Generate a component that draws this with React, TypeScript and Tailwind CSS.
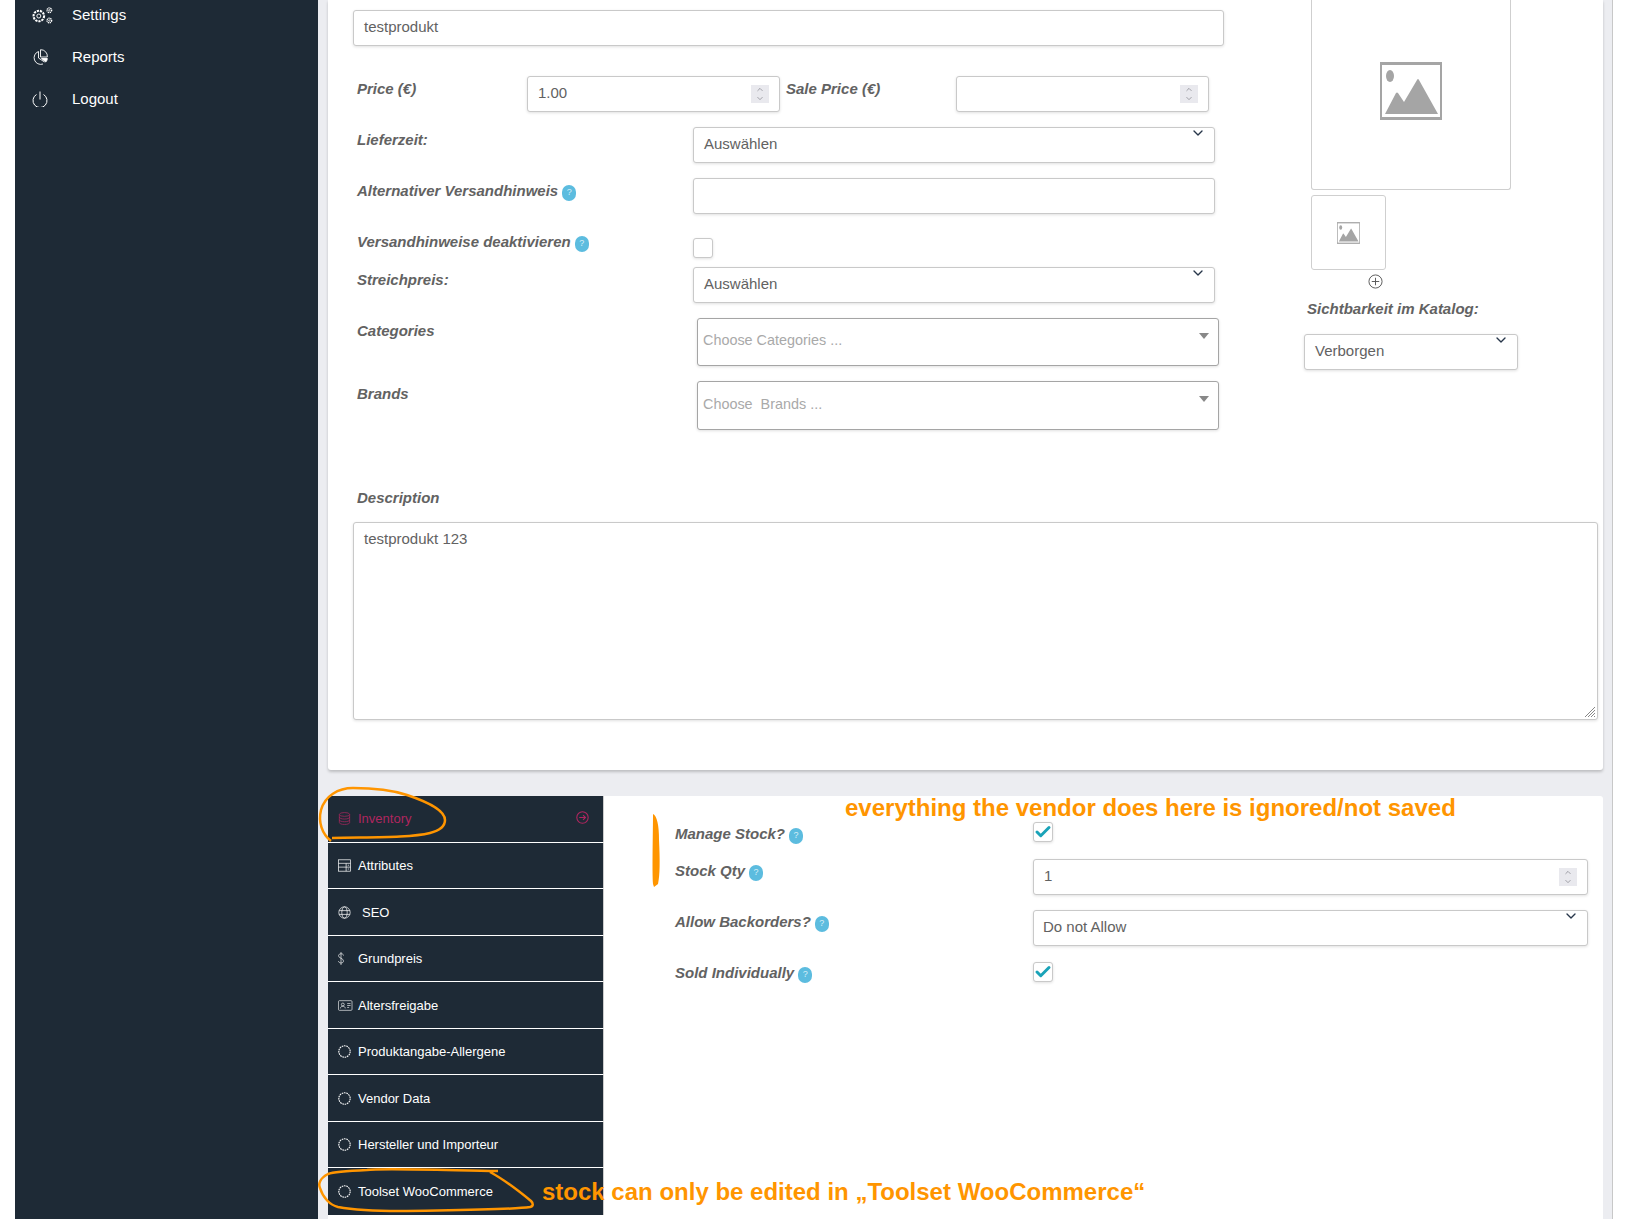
import { ChevronDown, ChevronUp, Check } from "lucide-react";

const font = "font-['Liberation_Sans',Arial,sans-serif]";
const field =
  "border border-[#c9c9c9] rounded-[3px] bg-white shadow-[0_1px_3px_rgba(0,0,0,0.12)] text-[15px] text-[#626262]";

function Ic({ children, className }: { children: React.ReactNode; className?: string }) {
  return (
    <svg viewBox="0 0 24 24" fill="none" stroke="currentColor" strokeWidth="1.3" className={className}>
      {children}
    </svg>
  );
}

function Gears() {
  return (
    <svg viewBox="0 0 20 16" fill="none" stroke="currentColor" className="w-[21px] h-[17px] text-white">
      <circle cx="6.500" cy="8.500" r="5" strokeDasharray="2.100 .9" strokeWidth="2" />
      <circle cx="6.500" cy="8.500" r="1.900" strokeWidth=".9" />
      <circle cx="16.500" cy="3" r="2.200" strokeDasharray="1.100 .6" strokeWidth="1.300" />
      <circle cx="16.500" cy="3" r=".7" strokeWidth=".7" />
      <circle cx="16.500" cy="12.800" r="2.200" strokeDasharray="1.100 .6" strokeWidth="1.300" />
      <circle cx="16.500" cy="12.800" r=".7" strokeWidth=".7" />
    </svg>
  );
}

function PieIcon() {
  return (
    <svg viewBox="0 0 16 16" fill="none" stroke="currentColor" strokeWidth=".9" className="w-[16px] h-[16px] text-white">
      <path d="M6.500 2.500a6.500 6.500 0 1 0 4.500 12.500" />
      <path d="M6.500 2.500v6.500l6 4" />
      <path d="M8.500.7a6.500 6.500 0 0 1 6.800 7.300h-6.800z" />
      <path d="M9.500 9.500h5.800c0 1.500-.7 2.600-1.500 3.500z" fill="currentColor" />
    </svg>
  );
}

function PowerIcon() {
  return (
    <svg viewBox="0 0 16 16" fill="none" stroke="currentColor" strokeWidth="1" className="w-[16px] h-[16px] text-white">
      <path d="M4.500 3.500a7 7 0 1 0 7 0" />
      <path d="M8 .5v8" />
    </svg>
  );
}

function Help() {
  return (
    <span className="inline-flex items-center justify-center w-[14px] h-[16px] rounded-full bg-[#5cbcdf] text-[#d5eef7] text-[9px] leading-none ml-1 align-[1px] not-italic font-normal">
      ?
    </span>
  );
}

function Label({ children, className = "" }: { children: React.ReactNode; className?: string }) {
  return <div className={`text-[15px] leading-[18px] font-bold italic text-[#626262] ${className}`}>{children}</div>;
}

function Spin() {
  return (
    <span className="flex flex-col items-center justify-center w-[18px] h-[18px] bg-[#e9e9ee] text-[#6f6f77]">
      <ChevronUp className="w-[12px] h-[9px]" strokeWidth={1.6} />
      <ChevronDown className="w-[12px] h-[9px]" strokeWidth={1.6} />
    </span>
  );
}

function NumberField({ value, className = "" }: { value?: string; className?: string }) {
  return (
    <div className={`${field} h-[36px] flex items-center justify-between pl-[10px] pr-[10px] ${className}`}>
      <span className="-mt-[1px]">{value}</span>
      <Spin />
    </div>
  );
}

function SelectField({ value, className = "" }: { value: string; className?: string }) {
  return (
    <div className={`${field} h-[36px] flex items-center pb-[1px] relative ${className}`}>
      <span>{value}</span>
      <ChevronDown className="absolute right-[7px] top-[-3px] w-[18px] h-[16px] text-[#27364a]" strokeWidth={2} />
    </div>
  );
}

function MultiSelect({ placeholder, className }: { placeholder: string; className: string }) {
  return (
    <div className={`border border-[#a5a5a5] rounded-[3px] bg-white shadow-[0_1px_3px_rgba(0,0,0,0.12)] ml-[4px] pl-[5px] flex items-center relative text-[14.400px] text-[#a9a9a9] ${className}`}>
      <span className="whitespace-pre">{placeholder}</span>
      <span className="absolute right-[9px] top-[14px] w-0 h-0 border-x-[5px] border-x-transparent border-t-[6px] border-t-[#888]" />
    </div>
  );
}

function Placeholder({ className }: { className: string }) {
  return (
    <svg viewBox="0 0 62 58" className={className}>
      <rect x="1" y="1.500" width="60" height="55" fill="white" stroke="#a5a5a5" strokeWidth="2" />
      <path d="M0 0h62v3H0zM0 55h62v3H0z" fill="#a5a5a5" />
      <ellipse cx="10" cy="14" rx="4" ry="6" fill="#a5a5a5" />
      <path d="M5 52 L16 31 Q17 30 18 31 L24 40 L37 18 Q38 16 39 18 L58 52 Z" fill="#a5a5a5" />
    </svg>
  );
}

function Ring() {
  return (
    <Ic className="w-[13px] h-[13px] shrink-0">
      <circle cx="12" cy="12" r="10.500" strokeWidth="2" strokeDasharray="3 1.300" />
    </Ic>
  );
}

const tabs: { label: string; icon: React.ReactNode; gap: string }[] = [
  {
    label: "Attributes",
    gap: "ml-[7px]",
    icon: (
      <Ic className="w-[13px] h-[13px] shrink-0">
        <rect x="1" y="1.500" width="22" height="21" />
        <path d="M1 8h22M1 15h22M15 8v14.500M18 11.500h2.500M18 18.500h2.500" />
      </Ic>
    ),
  },
  {
    label: "SEO",
    gap: "ml-[11px]",
    icon: (
      <Ic className="w-[13px] h-[13px] shrink-0">
        <circle cx="12" cy="12" r="10.500" />
        <ellipse cx="12" cy="12" rx="5" ry="10.500" />
        <path d="M2 8.500h20M2 15.500h20" />
      </Ic>
    ),
  },
  {
    label: "Grundpreis",
    gap: "ml-[14px]",
    icon: (
      <svg viewBox="0 0 12 26" fill="none" stroke="currentColor" strokeWidth="1.300" className="w-[6px] h-[13px] shrink-0">
        <path d="M11 7c0-2.500-2.500-3.500-5-3.500S1 5 1 7.500c0 5.500 10 4.500 10 10.500 0 2.800-2.500 4-5 4s-5-1.300-5-4M6 0v26" />
      </svg>
    ),
  },
  {
    label: "Altersfreigabe",
    gap: "ml-[5.500px]",
    icon: (
      <svg viewBox="0 0 30 22" fill="none" stroke="currentColor" strokeWidth="1.300" className="w-[14.500px] h-[11px] shrink-0">
        <rect x="1" y="1" width="28" height="20" rx="2" />
        <circle cx="10" cy="9" r="3" />
        <path d="M5 17c0-6 10-6 10 0M19 7h7M19 11h7M19 15h4" />
      </svg>
    ),
  },
  { label: "Produktangabe-Allergene", gap: "ml-[7px]", icon: <Ring /> },
  { label: "Vendor Data", gap: "ml-[7px]", icon: <Ring /> },
  { label: "Hersteller und Importeur", gap: "ml-[7px]", icon: <Ring /> },
  { label: "Toolset WooCommerce", gap: "ml-[7px]", icon: <Ring /> },
];

function CheckBox({ checked }: { checked?: boolean }) {
  return (
    <div className={`${field} w-[20px] h-[20px] flex items-center justify-center`}>
      {checked && <Check className="w-[18px] h-[18px] text-[#1aa3b8]" strokeWidth={4} />}
    </div>
  );
}

export default function App() {
  return (
    <div className={`${font} relative w-[1644px] h-[1219px] overflow-hidden bg-white flex`}>
      <div className="w-[15px] shrink-0" />

      <aside className="w-[303px] shrink-0 bg-[#1e2a36] text-white text-[15px] pl-[17px]">
        <div className="-mt-[6px] h-[42px] flex items-center">
          <div className="w-[40px]"><Gears /></div>Settings
        </div>
        <div className="h-[42px] flex items-center">
          <div className="w-[40px]"><PieIcon /></div>Reports
        </div>
        <div className="h-[42px] flex items-center">
          <div className="w-[40px]"><PowerIcon /></div>Logout
        </div>
      </aside>

      <main className="w-[1295px] shrink-0 bg-[#ecedf1] border-r border-[#c8c8c8] pl-[10px]">
        <section className="w-[1275px] h-[770px] bg-white rounded-b-[3px] shadow-[0_2px_3px_rgba(0,0,0,0.2)] pl-[25px] pr-[5px] flex flex-col">
          <div className="flex">
            <div className="w-[871px] pt-[10px] shrink-0">
              <div className={`${field} h-[36px] flex items-center pb-[1px] pl-[10px]`}>testprodukt</div>

              <div className="flex mt-[30px] h-[36px]">
                <Label className="w-[174px] pl-[4px] pt-[4px]">Price (€)</Label>
                <NumberField value="1.00" className="w-[253px]" />
                <Label className="w-[170px] pl-[6px] pt-[4px]">Sale Price (€)</Label>
                <NumberField className="w-[253px] ml-[6px]" />
              </div>

              <div className="flex mt-[15px]">
                <Label className="w-[340px] pl-[4px] pt-[4px]">Lieferzeit:</Label>
                <SelectField value="Auswählen" className="w-[522px] pl-[10px]" />
              </div>
              <div className="flex mt-[15px]">
                <Label className="w-[340px] pl-[4px] pt-[4px]">Alternativer Versandhinweis<Help /></Label>
                <div className={`${field} h-[36px] w-[522px]`} />
              </div>
              <div className="flex mt-[15px] h-[38px]">
                <Label className="w-[340px] pl-[4px] pt-[4px]">Versandhinweise deaktivieren<Help /></Label>
                <div className="pt-[9px]"><CheckBox /></div>
              </div>
              <div className="flex">
                <Label className="w-[340px] pl-[4px] pt-[4px]">Streichpreis:</Label>
                <SelectField value="Auswählen" className="w-[522px] pl-[10px]" />
              </div>
              <div className="flex mt-[15px]">
                <Label className="w-[340px] pl-[4px] pt-[4px]">Categories</Label>
                <div className="w-[526px]"><MultiSelect placeholder="Choose Categories ..." className="h-[48px] pb-[3px]" /></div>
              </div>
              <div className="flex mt-[15px]">
                <Label className="w-[340px] pl-[4px] pt-[4px]">Brands</Label>
                <div className="w-[526px]"><MultiSelect placeholder="Choose  Brands ..." className="h-[49px] pb-[1px]" /></div>
              </div>
            </div>

            <div className="ml-[87px] w-[220px] flex flex-col">
              <div className="w-[200px] h-[190px] pb-[8px] border border-t-0 border-[#cfcfcf] rounded-b-[3px] flex items-center justify-center">
                <Placeholder className="w-[62px] h-[58px]" />
              </div>
              <div className="mt-[5px] w-[75px] h-[75px] border border-[#cfcfcf] rounded-[3px] flex items-center justify-center">
                <Placeholder className="w-[23px] h-[22px]" />
              </div>
              <svg viewBox="0 0 16 16" fill="none" stroke="#555" strokeWidth="1" className="w-[15px] h-[15px] ml-[57px] mt-[4px]">
                <circle cx="8" cy="8" r="7" />
                <path d="M8 4v8M4 8h8" />
              </svg>
              <Label className="-ml-[4px] mt-[11px] whitespace-nowrap">Sichtbarkeit im Katalog:</Label>
              <SelectField value="Verborgen" className="-ml-[7px] w-[214px] mt-[16px] pl-[10px]" />
            </div>
          </div>

          <Label className="pl-[4px] mt-[59px]">Description</Label>
          <div className={`${field} relative mt-[15px] w-[1245px] h-[198px] pl-[10px] pt-[7px] leading-[18px]`}>
            testprodukt 123
            <svg viewBox="0 0 12 12" stroke="#888" className="absolute right-[1px] bottom-[1px] w-[12px] h-[12px]">
              <path d="M1 11L11 1M4 11L11 4M7 11L11 7M10 11L11 10" />
            </svg>
          </div>
        </section>

        <section className="w-[1275px] h-[423px] mt-[26px] bg-white rounded-t-[3px] flex">
          <div className="w-[276px] shrink-0 text-white text-[13px] flex flex-col">
            <div className="h-[46.500px] bg-[#1e2a36] border-r border-r-[#ccc] flex items-center pl-[10px] text-[#b0265f] border-b border-b-white">
              <Ic className="w-[13px] h-[13px] shrink-0">
                <ellipse cx="12" cy="4.500" rx="9.500" ry="3.500" />
                <path d="M2.500 4.500v15c0 2 4 3.500 9.500 3.500s9.500-1.500 9.500-3.500v-15M2.500 9.500c0 2 4 3.500 9.500 3.500s9.500-1.500 9.500-3.500M2.500 14.500c0 2 4 3.500 9.500 3.500s9.500-1.500 9.500-3.500" />
              </Ic>
              <span className="ml-[7px] flex-1">Inventory</span>
              <Ic className="w-[13px] h-[13px] mr-[14px] -mt-[2px]">
                <circle cx="12" cy="12" r="10.500" strokeWidth="2" />
                <path d="M6 12h11M13 7.500l4.500 4.500-4.500 4.500" strokeWidth="2" />
              </Ic>
            </div>
            {tabs.map((t, i) => (
              <div key={t.label} className={`${i === 7 ? "" : "border-b border-b-white"} h-[46.500px] bg-[#1e2a36] border-r border-r-[#ccc] flex items-center pl-[10px] pt-[1px]`}>
                {t.icon}
                <span className={t.gap}>{t.label}</span>
              </div>
            ))}
          </div>

          <div className="flex-1 relative pl-[71px] pt-[26px]">
            <div className="flex h-[20px]">
              <Label className="w-[358px] pt-[3px]">Manage Stock?<Help /></Label>
              <CheckBox checked />
            </div>
            <div className="flex mt-[17px]">
              <Label className="w-[358px] pt-[3px]">Stock Qty<Help /></Label>
              <NumberField value="1" className="w-[555px]" />
            </div>
            <div className="flex mt-[15px]">
              <Label className="w-[358px] pt-[3px]">Allow Backorders?<Help /></Label>
              <SelectField value="Do not Allow" className="w-[555px] pl-[9px]" />
            </div>
            <div className="flex mt-[16px] h-[20px]">
              <Label className="w-[358px] pt-[2px]">Sold Individually<Help /></Label>
              <CheckBox checked />
            </div>
          </div>
        </section>
      </main>

      {/* annotations drawn on top of the screenshot */}
      <div className="absolute left-[845px] top-[793px] text-[24px] leading-[30px] font-bold text-[#ff9500] whitespace-nowrap">
        everything the vendor does here is ignored/not saved
      </div>
      <div className="absolute left-[542px] top-[1177px] text-[24px] leading-[30px] font-bold text-[#ff9500] whitespace-nowrap">
        stock can only be edited in „Toolset WooCommerce“
      </div>
      <svg viewBox="0 0 1644 1219" fill="none" stroke="#ff9500" strokeWidth="2.500" className="absolute inset-0 w-[1644px] h-[1219px] pointer-events-none">
        <path d="M331 841 C322 834 318 822 321 810 C325 796 338 788 353 788 C375 788 395 791 407 795 C425 801 445 810 445 820 C445 828 438 831 430 833 C410 838 370 837 332 838" />
        <path d="M498 1171 C440 1170 380 1168 367 1170 C345 1171 333 1172 328 1174 C320 1178 318 1184 320 1188 C323 1198 330 1205 338 1207 C360 1211 380 1211 400 1211 C450 1210 510 1210 530 1207 C534 1206 533 1203 531 1201 C520 1192 505 1180 490 1172" />
        <path d="M653 814 C657 816 659 825 659 840 C660 860 660 875 658 884 L654 887 L653 884 C652 870 653 830 653 814 Z" fill="#ff9500" stroke="none" />
      </svg>
    </div>
  );
}
